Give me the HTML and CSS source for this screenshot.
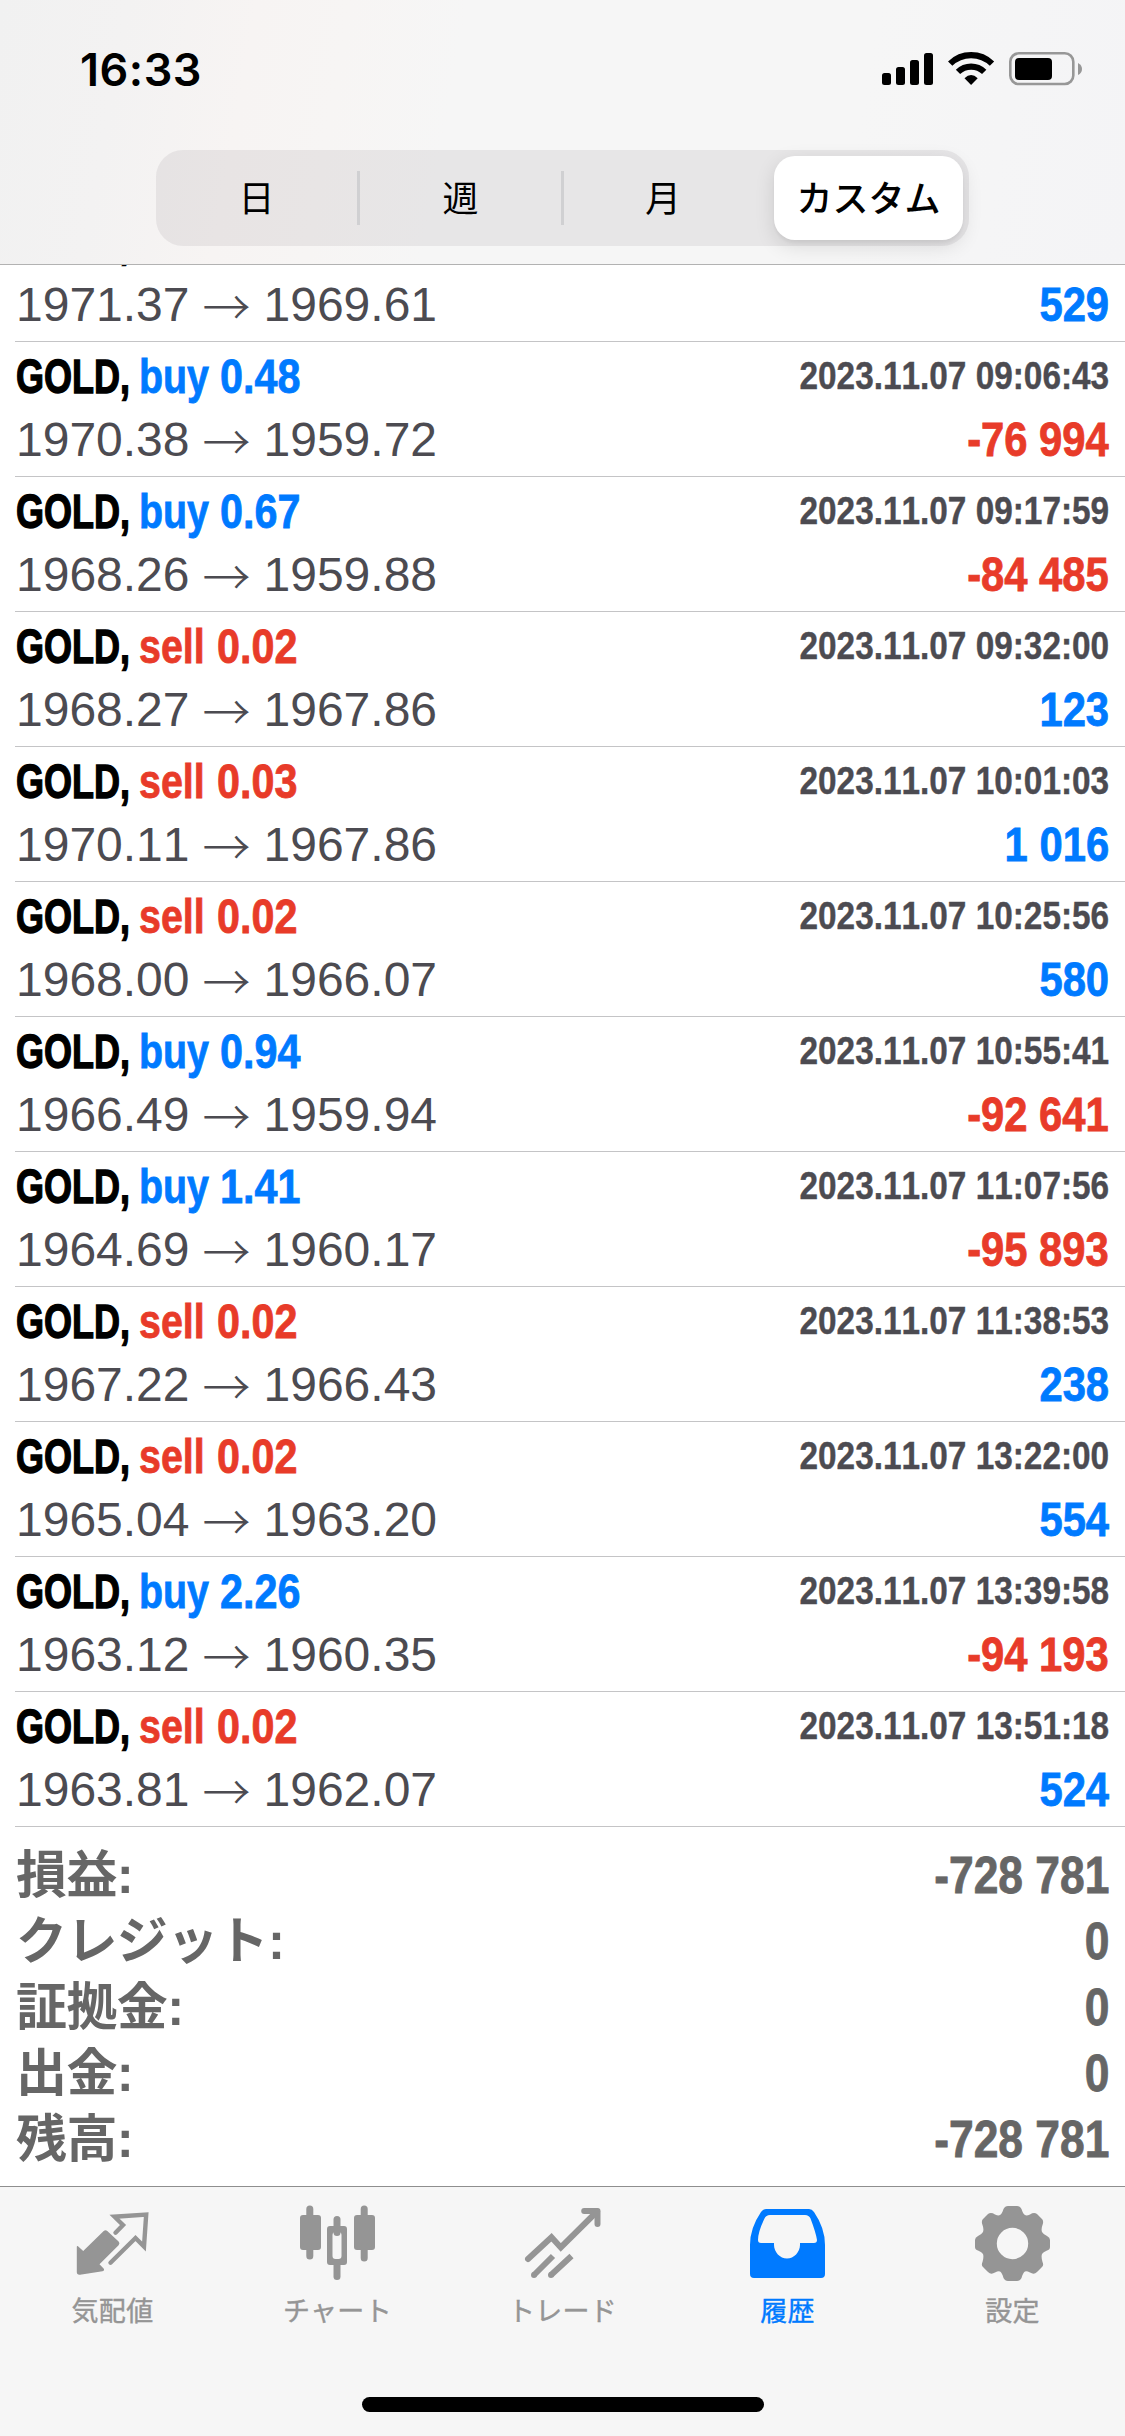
FILE: index.html
```
<!DOCTYPE html>
<html lang="ja">
<head>
<meta charset="utf-8">
<title>履歴</title>
<link rel="stylesheet" href="styles.css">
</head>
<body>
<div class="app">
  <header class="header">
    <div class="status">
      <span class="clock">16:33</span>
      <svg class="status-icons" viewBox="0 0 202 36" width="202" height="36">
        <g>
          <rect x="0" y="22" width="9" height="12" rx="2.5"/>
          <rect x="14" y="16" width="9" height="18" rx="2.5"/>
          <rect x="28" y="9" width="9" height="25" rx="2.5"/>
          <rect x="42" y="2" width="9" height="32" rx="2.5"/>
        </g>
        <g fill="none" stroke="#000" stroke-width="6.2">
          <path d="M68.2 12.6A29.9 29.9 0 0 1 110 12.6"/>
          <path d="M76 20.9A18.8 18.8 0 0 1 102.2 20.9"/>
        </g>
        <path d="M89.1 34L82.5 27.2Q89.1 21 95.700 27.2Z"/>
        <rect x="128.3" y="2.3" width="63" height="30.7" rx="8.5" fill="none" stroke="#979797" stroke-width="2.6"/>
        <rect x="133" y="7" width="37" height="22" rx="4"/>
        <path d="M196 12Q200 14 200 18T196 24Z" fill="#979797"/>
      </svg>
    </div>
    <nav class="segments">
      <span class="segment">日</span>
      <span class="segment">週</span>
      <span class="segment">月</span>
      <span class="segment active">カスタム</span>
    </nav>
  </header>

  <main class="history">
    <div class="deal"><div class="line"><span class="symbol">GOLD,</span></div><div class="line"><span class="price">1971.37</span><span class="arrow">→</span><span class="price">1969.61</span><span class="profit plus">529</span></div></div>
    <div class="deal"><div class="line"><span class="symbol">GOLD,</span><span class="side buy">buy</span><span class="volume buy">0.48</span><span class="time">2023.11.07 09:06:43</span></div><div class="line"><span class="price">1970.38</span><span class="arrow">→</span><span class="price">1959.72</span><span class="profit minus">-76 994</span></div></div>
    <div class="deal"><div class="line"><span class="symbol">GOLD,</span><span class="side buy">buy</span><span class="volume buy">0.67</span><span class="time">2023.11.07 09:17:59</span></div><div class="line"><span class="price">1968.26</span><span class="arrow">→</span><span class="price">1959.88</span><span class="profit minus">-84 485</span></div></div>
    <div class="deal"><div class="line"><span class="symbol">GOLD,</span><span class="side sell">sell</span><span class="volume sell">0.02</span><span class="time">2023.11.07 09:32:00</span></div><div class="line"><span class="price">1968.27</span><span class="arrow">→</span><span class="price">1967.86</span><span class="profit plus">123</span></div></div>
    <div class="deal"><div class="line"><span class="symbol">GOLD,</span><span class="side sell">sell</span><span class="volume sell">0.03</span><span class="time">2023.11.07 10:01:03</span></div><div class="line"><span class="price">1970.11</span><span class="arrow">→</span><span class="price">1967.86</span><span class="profit plus">1 016</span></div></div>
    <div class="deal"><div class="line"><span class="symbol">GOLD,</span><span class="side sell">sell</span><span class="volume sell">0.02</span><span class="time">2023.11.07 10:25:56</span></div><div class="line"><span class="price">1968.00</span><span class="arrow">→</span><span class="price">1966.07</span><span class="profit plus">580</span></div></div>
    <div class="deal"><div class="line"><span class="symbol">GOLD,</span><span class="side buy">buy</span><span class="volume buy">0.94</span><span class="time">2023.11.07 10:55:41</span></div><div class="line"><span class="price">1966.49</span><span class="arrow">→</span><span class="price">1959.94</span><span class="profit minus">-92 641</span></div></div>
    <div class="deal"><div class="line"><span class="symbol">GOLD,</span><span class="side buy">buy</span><span class="volume buy">1.41</span><span class="time">2023.11.07 11:07:56</span></div><div class="line"><span class="price">1964.69</span><span class="arrow">→</span><span class="price">1960.17</span><span class="profit minus">-95 893</span></div></div>
    <div class="deal"><div class="line"><span class="symbol">GOLD,</span><span class="side sell">sell</span><span class="volume sell">0.02</span><span class="time">2023.11.07 11:38:53</span></div><div class="line"><span class="price">1967.22</span><span class="arrow">→</span><span class="price">1966.43</span><span class="profit plus">238</span></div></div>
    <div class="deal"><div class="line"><span class="symbol">GOLD,</span><span class="side sell">sell</span><span class="volume sell">0.02</span><span class="time">2023.11.07 13:22:00</span></div><div class="line"><span class="price">1965.04</span><span class="arrow">→</span><span class="price">1963.20</span><span class="profit plus">554</span></div></div>
    <div class="deal"><div class="line"><span class="symbol">GOLD,</span><span class="side buy">buy</span><span class="volume buy">2.26</span><span class="time">2023.11.07 13:39:58</span></div><div class="line"><span class="price">1963.12</span><span class="arrow">→</span><span class="price">1960.35</span><span class="profit minus">-94 193</span></div></div>
    <div class="deal"><div class="line"><span class="symbol">GOLD,</span><span class="side sell">sell</span><span class="volume sell">0.02</span><span class="time">2023.11.07 13:51:18</span></div><div class="line"><span class="price">1963.81</span><span class="arrow">→</span><span class="price">1962.07</span><span class="profit plus">524</span></div></div>

    <div class="summary">
      <div class="total"><span class="label">損益:</span><span class="amount">-728 781</span></div>
      <div class="total"><span class="label">クレジット:</span><span class="amount">0</span></div>
      <div class="total"><span class="label">証拠金:</span><span class="amount">0</span></div>
      <div class="total"><span class="label">出金:</span><span class="amount">0</span></div>
      <div class="total"><span class="label">残高:</span><span class="amount">-728 781</span></div>
    </div>
  </main>

  <footer class="tabbar">
    <div class="tabs">
      <div class="tab">
        <svg class="icon" viewBox="0 0 78 78">
          <path d="M2.8 43Q2.8 41.500 4 42.300L9.200 47L29.700 27Q31.500 25.300 33.300 27L44.600 37.500Q46.300 39.300 44.600 41.200L25.500 60.300L29.600 64.500Q31 66.700 28.500 67.200L6 70.700Q2.800 71 2.800 68Z"/>
          <path d="M41.500 28.7L49 21L40.500 12.700L72.200 10.500L70 42.500L61.500 34L36.500 58.700" fill="none" stroke="currentColor" stroke-width="4.400" stroke-linecap="round"/>
        </svg>
        <span>気配値</span>
      </div>
      <div class="tab">
        <svg class="icon" viewBox="0 0 78 78">
          <rect x="7.3" y="1.5" width="7" height="54" rx="3.5"/>
          <rect x="1" y="11" width="21" height="35" rx="3"/>
          <rect x="34.5" y="12" width="7" height="20" rx="3.5"/>
          <rect x="34.5" y="58" width="7" height="18" rx="3.5"/>
          <path fill-rule="evenodd" d="M31 22H45Q48 22 48 25V58Q48 61 45 61H31Q28 61 28 58V25Q28 22 31 22ZM36.5 28Q33.5 28 33.5 31V52Q33.5 55 36.5 55H39.5Q42.5 55 42.5 52V31Q42.5 28 39.5 28Z"/>
          <rect x="61.7" y="1.5" width="7" height="56" rx="3.5"/>
          <rect x="55" y="11" width="21" height="35" rx="3"/>
        </svg>
        <span>チャート</span>
      </div>
      <div class="tab">
        <svg class="icon" viewBox="0 0 78 78" fill="none" stroke="currentColor" stroke-width="6">
          <path d="M4 55L27.5 33.2L36.8 43.4L73 7.5" stroke-linecap="round"/>
          <path d="M60.2 7H73.5V20" stroke-linecap="round" stroke-linejoin="round"/>
          <path d="M10 71L29 52M27 71L47.5 52"/>
          <path d="M10 71h.01M27 71h.01" stroke-linecap="round"/>
        </svg>
        <span>トレード</span>
      </div>
      <div class="tab selected">
        <svg class="icon" viewBox="0 0 78 78">
          <path fill-rule="evenodd" d="M17 5H60Q63 5 65 8Q76 24 76 41V70Q76 74 72 74H5Q1 74 1 70V41Q1 24 12 8Q14 5 17 5ZM21 11Q17 11 15.500 14.500Q9 28 9 36Q9 39 12 39H25V41C25 48 31 54.500 38 54.500S51 48 51 41V39H65Q68 39 68 36Q67 29 61.500 14.500Q60 11 56 11Z"/>
        </svg>
        <span>履歴</span>
      </div>
      <div class="tab">
        <svg class="icon" viewBox="0 0 78 78">
          <path fill-rule="evenodd" d="M34 2H43Q46 2 47.500 5Q49 10 51 11Q52.500 12 56 10.500Q60 8 63 10L68 15Q70 17 68.500 21Q67 25 68 28Q69 30 73 32Q76 33.500 76 36V43Q76 45.500 73 46.500Q69 48 68 50Q67 53 68.500 58Q70 61 68 63L63 68Q60 71 56 68.500Q52.500 66.500 51 67.500Q49 68.500 47.500 74Q46 77 43 77H34Q31 77 29.500 74Q28 68.500 26 67.500Q24.500 66.500 21 68.500Q17 71 14 68L9 63Q7 61 8.500 58Q10 53 9 50Q8 48 4 46.500Q1 45.500 1 43V36Q1 33.500 4 32Q8 30 9 28Q10 25 8.500 21Q7 17 9 15L14 10Q17 8 21 10.500Q24.500 12 26 11Q28 10 29.500 5Q31 2 34 2ZM38.500 23.800A15.700 15.700 0 1 0 38.500 55.200A15.700 15.700 0 1 0 38.500 23.800Z"/>
        </svg>
        <span>設定</span>
      </div>
    </div>
    <div class="home"></div>
  </footer>
</div>
</body>
</html>
```
FILE: styles.css
```
* { box-sizing: border-box; }
body {
  margin: 0;
  background: #fff;
  font-family: "Liberation Sans", "Noto Sans CJK JP", sans-serif;
}
.app {
  width: 1125px;
  height: 2436px;
  display: flex;
  flex-direction: column;
  overflow: hidden;
}

/* Header */
.header {
  flex: none;
  height: 265px;
  border-bottom: 1px solid #b2b2b2;
  background: linear-gradient(100deg, #f1f1f1 0%, #f3f2f2 11%, #f7f4f3 22%, #f7f5f4 30%, #f6f6f6 40%, #f6f6f6 75%, #f4f4f6 100%);
}
.status {
  height: 150px;
  padding: 51px 41px 0 80px;
  display: flex;
  justify-content: space-between;
  align-items: flex-start;
}
.clock {
  font: 600 45px/37px Inter, sans-serif;
  letter-spacing: .5px;
}
.segments {
  width: 813px;
  height: 96px;
  margin-left: 156px;
  padding: 6px 6px 6px 0;
  display: grid;
  grid-template-columns: 201px 207px 198px 1fr;
  align-items: stretch;
  border-radius: 27px;
  background: rgba(120, 118, 122, .12);
  font: 400 36px/80px "Noto Sans CJK JP", sans-serif;
  text-align: center;
}
.segment:nth-child(2) {
  background: linear-gradient(#d0d0d2, #d0d0d2) 0 15px / 3px 54px no-repeat, linear-gradient(#d0d0d2, #d0d0d2) 100% 15px / 3px 54px no-repeat;
}
.segment.active {
  width: 189px;
  justify-self: end;
  border-radius: 21px;
  background: #fff;
  font-weight: 500;
  box-shadow: 0 6px 20px rgba(0, 0, 0, .12), 0 3px 3px rgba(0, 0, 0, .04);
}

/* Deals */
.history {
  flex: 1;
  overflow: hidden;
}
.deal {
  height: 135px;
  margin-left: 15px;
  padding: 3px 16px 0 1px;
  border-bottom: 1px solid #c4c4c6;
}
.deal:first-child { margin-top: -58px; }
.line {
  display: flex;
  height: 63px;
  font-size: 48px;
  line-height: 63px;
  font-kerning: none;
  color: #4c4b51;
  white-space: pre;
}
.symbol, .side, .volume, .time, .profit, .amount {
  font-weight: 700;
  transform-origin: 0 0;
  -webkit-text-stroke: .8px currentColor;
}
.symbol { width: 123px; color: #000; transform: scaleX(.75); -webkit-text-stroke-width: 1.4px; }
.side { transform: scaleX(.82); }
.side.buy { width: 81px; }
.side.sell { width: 78px; }
.volume { width: 80px; transform: scaleX(.86); }
.time {
  margin-left: auto;
  font-size: 39px;
  line-height: 61px;
  transform: scaleX(.855);
  transform-origin: 100% 0;
  -webkit-text-stroke-width: .4px;
}
.profit { margin-left: auto; transform: scaleX(.87); transform-origin: 100% 0; }
.arrow {
  width: 74px;
  text-align: center;
  font-family: "Noto Sans CJK JP", sans-serif;
  font-weight: 300;
}
.buy, .plus { color: #007aff; }
.sell, .minus { color: #e83b29; }

/* Totals */
.summary {
  padding: 16px 16px 0 15px;
  color: #666;
  font-size: 51px;
  font-weight: 700;
  line-height: 66px;
  font-kerning: none;
}
.total {
  display: flex;
  justify-content: space-between;
  height: 66px;
}
.label { letter-spacing: -.6px; padding-left: 1px; }
.amount { transform: scaleX(.87); transform-origin: 100% 0; }

/* Tab bar */
.tabbar {
  flex: none;
  height: 250px;
  border-top: 1px solid #8e8e8e;
  background: #f6f6f6;
  display: flex;
  flex-direction: column;
  align-items: center;
}
.tabs {
  width: 100%;
  height: 210px;
  display: grid;
  grid-template-columns: repeat(5, 225px);
}
.tab {
  padding-top: 17px;
  display: flex;
  flex-direction: column;
  align-items: center;
  color: #959595;
  font: 400 27px/40px "Noto Sans CJK JP", sans-serif;
  letter-spacing: .3px;
  -webkit-text-stroke: .4px currentColor;
}
.tab.selected { color: #007aff; }
.icon {
  width: 78px;
  height: 78px;
  margin-bottom: 8px;
}
.icon:not([fill]) { fill: currentColor; }
.home {
  width: 402px;
  height: 15px;
  border-radius: 8px;
  background: #000;
}
```
